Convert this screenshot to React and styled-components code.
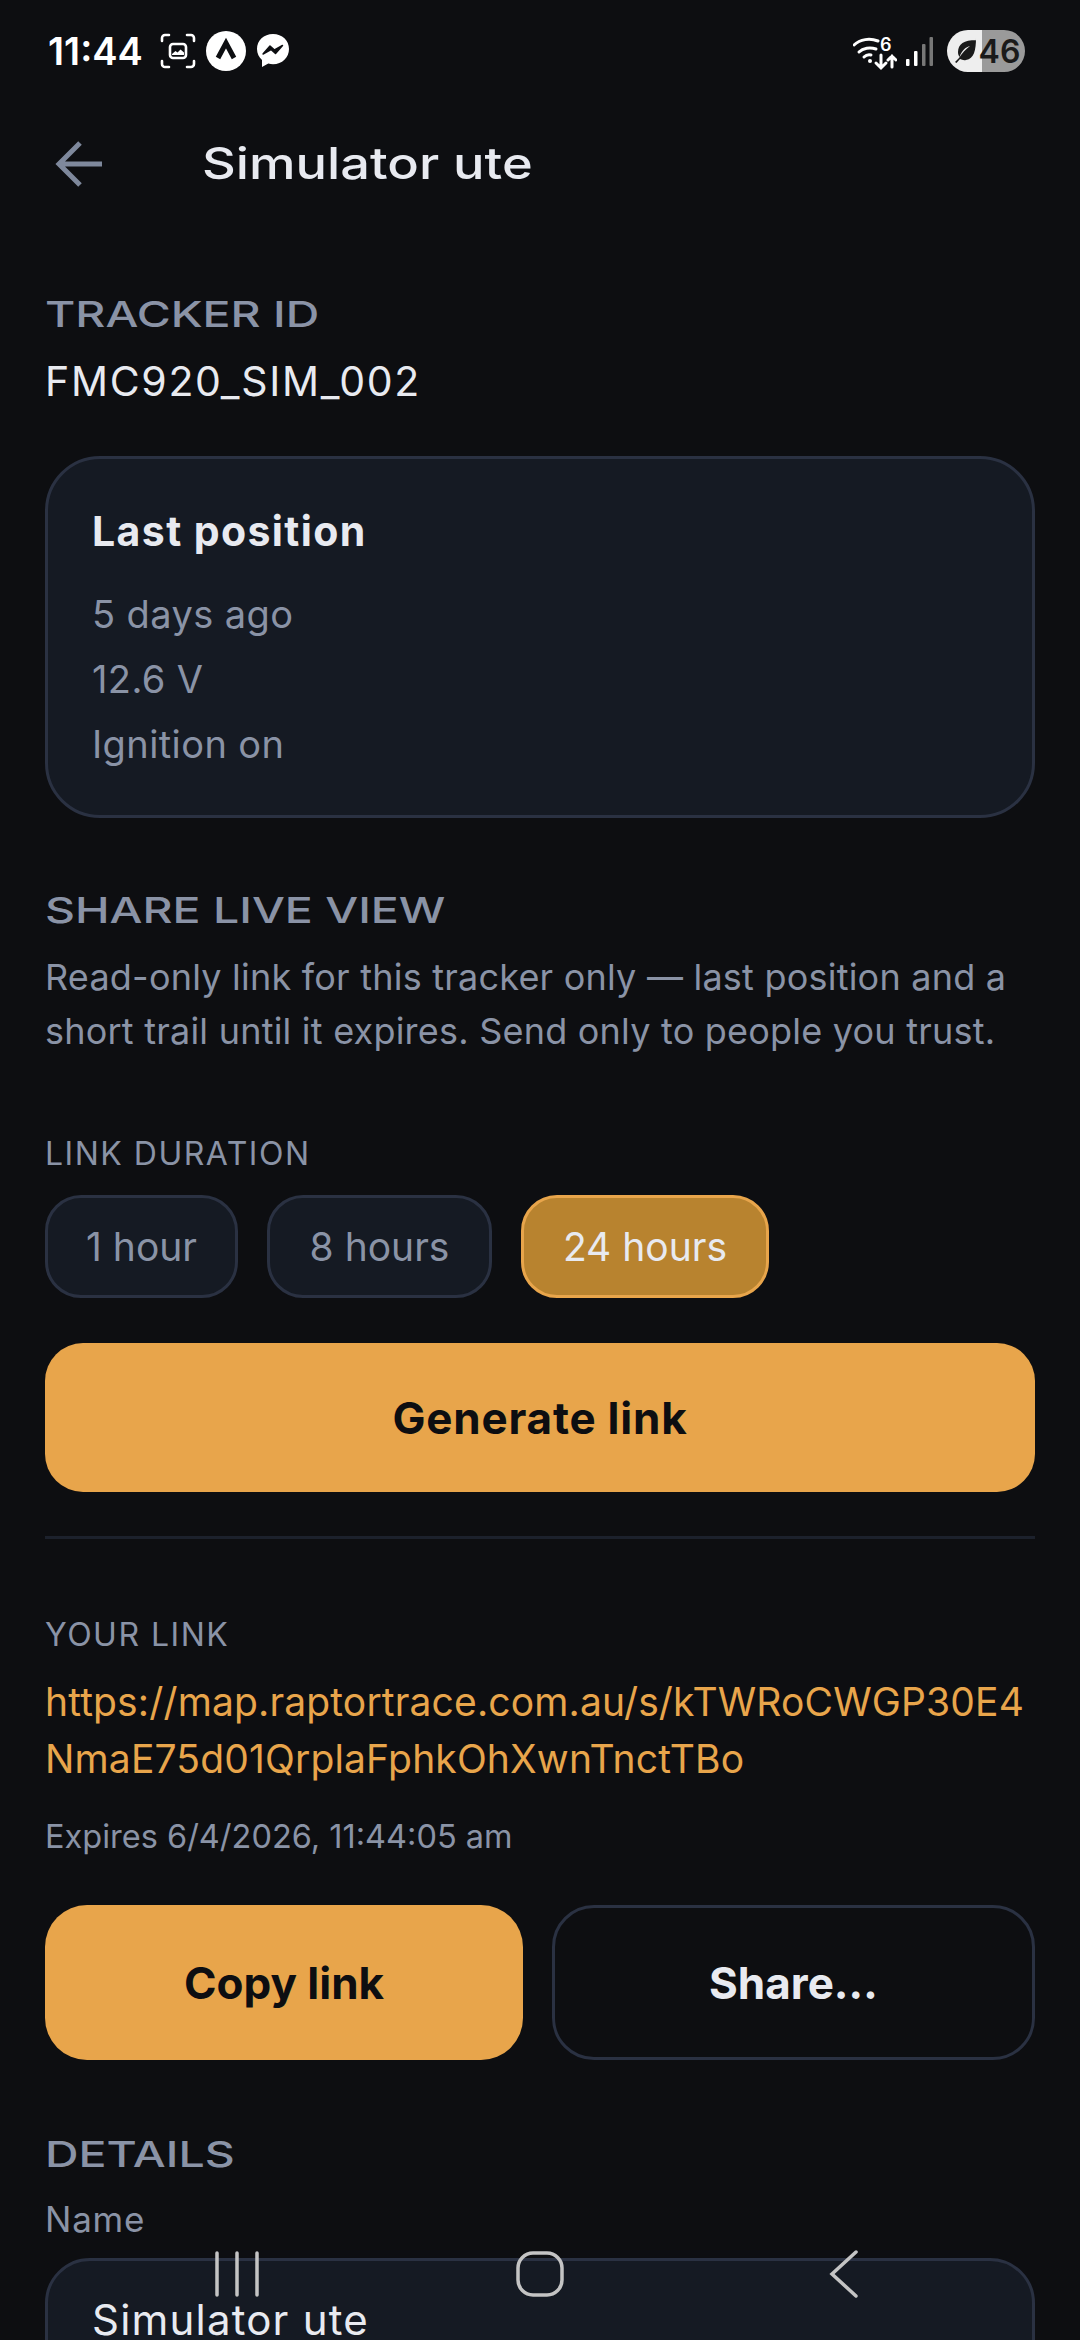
import React from 'react'
import styled, { createGlobalStyle } from 'styled-components'

const GlobalStyle = createGlobalStyle`
  html, body {
    margin: 0;
    padding: 0;
    background: #0d0e11;
  }
  * { box-sizing: border-box; }
`

const colors = {
  bg: '#0d0e11',
  card: '#151a23',
  border: '#2a3142',
  text: '#e8eaf0',
  muted: '#8a93a6',
  amber: '#e8a54b',
  amberDark: '#b8832f',
  ink: '#0d0e11',
}

const Screen = styled.div`
  position: relative;
  width: 1080px;
  height: 2340px;
  overflow: hidden;
  background: ${colors.bg};
  color: ${colors.text};
  font-family: Inter, "Noto Sans", sans-serif;
`
const StatusBar = styled.div`
  display: flex;
  align-items: center;
  justify-content: space-between;
  height: 102px;
  padding: 0 55px 0 48px;
`
const StatusGroup = styled.div`
  display: flex;
  align-items: center;
`
const Clock = styled.span`
  font-size: 38px;
  font-weight: 600;
  color: #fff;
  margin-right: 17px;
`
const BatteryPill = styled.div`
  display: flex;
  align-items: center;
  justify-content: center;
  gap: 1px;
  width: 78px;
  height: 42px;
  border-radius: 21px;
  background: linear-gradient(90deg, #eeeeee 0 45%, #9a9a9a 45% 100%);
  color: #1a1a1a;
  font-size: 32px;
  font-weight: 600;
`
const Header = styled.div`
  display: flex;
  align-items: center;
  height: 122px;
  padding-left: 55px;
`
const BackButton = styled.svg`
  width: 47px;
  height: 47px;
  margin-right: 100px;
`
const Title = styled.h1`
  margin: 0;
  font-size: 44px;
  font-weight: 500;
  transform: scaleX(1.19);
  transform-origin: left center;
`
const Body = styled.div`
  padding: 0 45px;
`
const SectionLabel = styled.div`
  font-size: 36px;
  font-weight: 500;
  color: ${colors.muted};
  margin-top: ${(p) => p.$top || 0}px;
  line-height: 40px;
  transform: scaleX(1.29);
  transform-origin: left center;
`
const TrackerId = styled.div`
  font-size: 41px;
  line-height: 50px;
  letter-spacing: 1.7px;
  margin-top: 22px;
`
const Card = styled.div`
  margin-top: 50px;
  height: 362px;
  padding: 47px 44px 0;
  background: ${colors.card};
  border: 3px solid ${colors.border};
  border-radius: 55px;
`
const CardTitle = styled.div`
  font-size: 41px;
  font-weight: 700;
  letter-spacing: 1.4px;
  line-height: 50px;
  margin-bottom: 26px;
`
const CardLine = styled.div`
  font-size: 38px;
  letter-spacing: 0.4px;
  line-height: 65px;
  color: ${colors.muted};
`
const Paragraph = styled.p`
  margin: 20px 0 0;
  font-size: 36px;
  letter-spacing: 0.22px;
  line-height: 54px;
  color: ${colors.muted};
`
const SmallLabel = styled.div`
  font-size: 32px;
  line-height: 40px;
  letter-spacing: 1.5px;
  color: ${colors.muted};
  margin-top: ${(p) => p.$top || 0}px;
`
const ChipRow = styled.div`
  display: flex;
  gap: 29px;
  margin-top: 21px;
`
const Chip = styled.div`
  display: flex;
  align-items: center;
  justify-content: center;
  width: ${(p) => p.$w}px;
  height: 103px;
  border-radius: 36px;
  font-size: 39px;
  border: 3px solid ${(p) => (p.$active ? colors.amber : colors.border)};
  background: ${(p) => (p.$active ? colors.amberDark : colors.card)};
  color: ${(p) => (p.$active ? colors.text : colors.muted)};
`
const GenerateButton = styled.div`
  display: flex;
  align-items: center;
  justify-content: center;
  height: 149px;
  margin-top: 45px;
  border-radius: 38px;
  background: ${colors.amber};
  color: ${colors.ink};
  font-size: 44px;
  letter-spacing: 0.8px;
  font-weight: 700;
`
const Divider = styled.div`
  height: 3px;
  margin-top: 44px;
  background: #1c212c;
`
const LinkText = styled.div`
  margin-top: 18px;
  font-size: 39px;
  letter-spacing: 0.15px;
  line-height: 57px;
  color: ${colors.amber};
  word-break: break-all;
`
const Expires = styled.div`
  margin-top: 28px;
  font-size: 32.5px;
  line-height: 44px;
  color: ${colors.muted};
`
const ActionRow = styled.div`
  display: flex;
  gap: 29px;
  margin-top: 46px;
`
const ActionButton = styled.div`
  display: flex;
  align-items: center;
  justify-content: center;
  flex: 0 0 ${(p) => p.$w}px;
  height: 155px;
  border-radius: 42px;
  font-size: 44px;
  font-weight: 700;
  background: ${(p) => (p.$primary ? colors.amber : 'transparent')};
  color: ${(p) => (p.$primary ? colors.ink : colors.text)};
  border: ${(p) => (p.$primary ? 'none' : `3px solid ${colors.border}`)};
`
const FieldLabel = styled.div`
  margin-top: 23px;
  font-size: 35px;
  letter-spacing: 0.8px;
  line-height: 44px;
  color: ${colors.muted};
`
const Input = styled.div`
  margin-top: 17px;
  height: 180px;
  padding: 34px 44px 0;
  font-size: 42px;
  letter-spacing: 1.2px;
  line-height: 50px;
  background: ${colors.card};
  border: 3px solid ${colors.border};
  border-radius: 45px;
`
const NavBar = styled.div`
  position: absolute;
  left: 0;
  right: 0;
  top: 2249px;
  height: 50px;
  display: grid;
  grid-template-columns: repeat(3, 1fr);
  justify-items: center;
  align-items: center;
  padding: 0 85px;
`
const NavIcon = styled.svg`
  width: 50px;
  height: 50px;
  stroke: #c4c4c4;
  fill: none;
  stroke-width: 3.5;
  stroke-linecap: round;
`

function ScanIcon() {
  return (
    <svg width="36" height="36" viewBox="0 0 36 36" fill="none" stroke="#fff" strokeWidth="2.6" strokeLinecap="round">
      <path d="M2 8V5a3 3 0 0 1 3-3h4M27 2h4a3 3 0 0 1 3 3v3M34 28v3a3 3 0 0 1-3 3h-4M9 34H5a3 3 0 0 1-3-3v-3" />
      <rect x="10" y="11" width="16" height="14" rx="3" />
      <path d="M12 21l3.500-3 2 1.500 3-3 3.500 3v2.500H12z" fill="#fff" stroke="none" />
    </svg>
  )
}

function CircleCaret() {
  return (
    <svg width="40" height="40" viewBox="0 0 40 40" style={{ margin: '0 10px' }}>
      <circle cx="20" cy="20" r="20" fill="#fff" />
      <path d="M12 27l8-15 8 15" fill="none" stroke="#0d0e11" strokeWidth="5" />
    </svg>
  )
}

function MessengerIcon() {
  return (
    <svg width="34" height="36" viewBox="0 0 34 36">
      <path d="M17 1C7.800 1 1 7.600 1 16c0 4.500 2 8.300 5 11v7l6.300-3.400c1.500.4 3.100.6 4.700.6 9.200 0 16-6.600 16-15.200S26.200 1 17 1z" fill="#fff" />
      <path d="M7 21l7-8 4.500 4 8-4.500-7 8-4.500-4z" fill="#0d0e11" stroke="#0d0e11" strokeWidth="1.500" strokeLinejoin="round" />
    </svg>
  )
}

function WifiIcon() {
  return (
    <svg width="44" height="44" viewBox="0 -8 44 44" fill="none" stroke="#fff" strokeWidth="3" strokeLinecap="round">
      <path d="M1 8C7 2 17 1 25 4" />
      <path d="M6 15c4-4 11-5 17-3" />
      <path d="M11 20c2-2 5-2.500 7-2" />
      <circle cx="17" cy="24" r="2" fill="#fff" stroke="none" />
      <path d="M28 18v12m-5-4l5 5 5-5" />
      <path d="M39 30V19m-4 4l4-4 4 4" />
      <text x="27" y="14" fill="#fff" stroke="none" fontSize="18" fontWeight="600" fontFamily="Inter, sans-serif">6</text>
    </svg>
  )
}

function SignalIcon() {
  return (
    <svg width="27" height="29" viewBox="0 0 27 29" style={{ margin: '0 14px 0 9px' }}>
      <rect x="0" y="22" width="3.500" height="7" rx="1" fill="#fff" />
      <rect x="8" y="14" width="3.500" height="15" rx="1" fill="#fff" />
      <rect x="16" y="7" width="3.500" height="22" rx="1" fill="#777" />
      <rect x="23.500" y="0" width="3.500" height="29" rx="1" fill="#777" />
    </svg>
  )
}

function LeafIcon() {
  return (
    <svg width="26" height="26" viewBox="0 0 26 26">
      <path d="M24 2C12 2 6 6 6 14c0 2 .5 3.500 1.500 5C10 12 14 9 18 8c-4 3-8 7-11 12l-4 4 1.500 1 3.500-4c2 1 4 1.500 6 1 8-1 10-10 10-22z" fill="#1a1a1a" />
    </svg>
  )
}

export default function App() {
  return (
    <Screen>
      <GlobalStyle />
      <StatusBar>
        <StatusGroup>
          <Clock>11:44</Clock>
          <ScanIcon />
          <CircleCaret />
          <MessengerIcon />
        </StatusGroup>
        <StatusGroup>
          <WifiIcon />
          <SignalIcon />
          <BatteryPill>
            <LeafIcon />
            46
          </BatteryPill>
        </StatusGroup>
      </StatusBar>
      <Header>
        <BackButton viewBox="0 0 47 47" fill="none" stroke="#7e889c" strokeWidth="5">
          <path d="M25 3L4 24l21 21M4 24h43" />
        </BackButton>
        <Title>Simulator ute</Title>
      </Header>
      <Body>
        <SectionLabel $top={70}>TRACKER ID</SectionLabel>
        <TrackerId>FMC920_SIM_002</TrackerId>
        <Card>
          <CardTitle>Last position</CardTitle>
          <CardLine>5 days ago</CardLine>
          <CardLine>12.6 V</CardLine>
          <CardLine>Ignition on</CardLine>
        </Card>
        <SectionLabel $top={72}>SHARE LIVE VIEW</SectionLabel>
        <Paragraph>
          Read-only link for this tracker only — last position and a short trail until it expires. Send only to people you trust.
        </Paragraph>
        <SmallLabel $top={76}>LINK DURATION</SmallLabel>
        <ChipRow>
          <Chip $w={193}>1 hour</Chip>
          <Chip $w={225}>8 hours</Chip>
          <Chip $w={248} $active>24 hours</Chip>
        </ChipRow>
        <GenerateButton>Generate link</GenerateButton>
        <Divider />
        <SmallLabel $top={76}>YOUR LINK</SmallLabel>
        <LinkText>https://map.raptortrace.com.au/s/kTWRoCWGP30E4NmaE75d01QrplaFphkOhXwnTnctTBo</LinkText>
        <Expires>Expires 6/4/2026, 11:44:05 am</Expires>
        <ActionRow>
          <ActionButton $primary $w={478}>Copy link</ActionButton>
          <ActionButton $w={483}>Share…</ActionButton>
        </ActionRow>
        <SectionLabel $top={74}>DETAILS</SectionLabel>
        <FieldLabel>Name</FieldLabel>
        <Input>Simulator ute</Input>
      </Body>
      <NavBar>
        <NavIcon viewBox="0 0 50 50">
          <path d="M5 4v42M25 4v42M45 4v42" />
        </NavIcon>
        <NavIcon viewBox="0 0 50 50">
          <rect x="3" y="4" width="44" height="42" rx="15" />
        </NavIcon>
        <NavIcon viewBox="0 0 50 50">
          <path d="M38 3L14 25l24 22" />
        </NavIcon>
      </NavBar>
    </Screen>
  )
}
